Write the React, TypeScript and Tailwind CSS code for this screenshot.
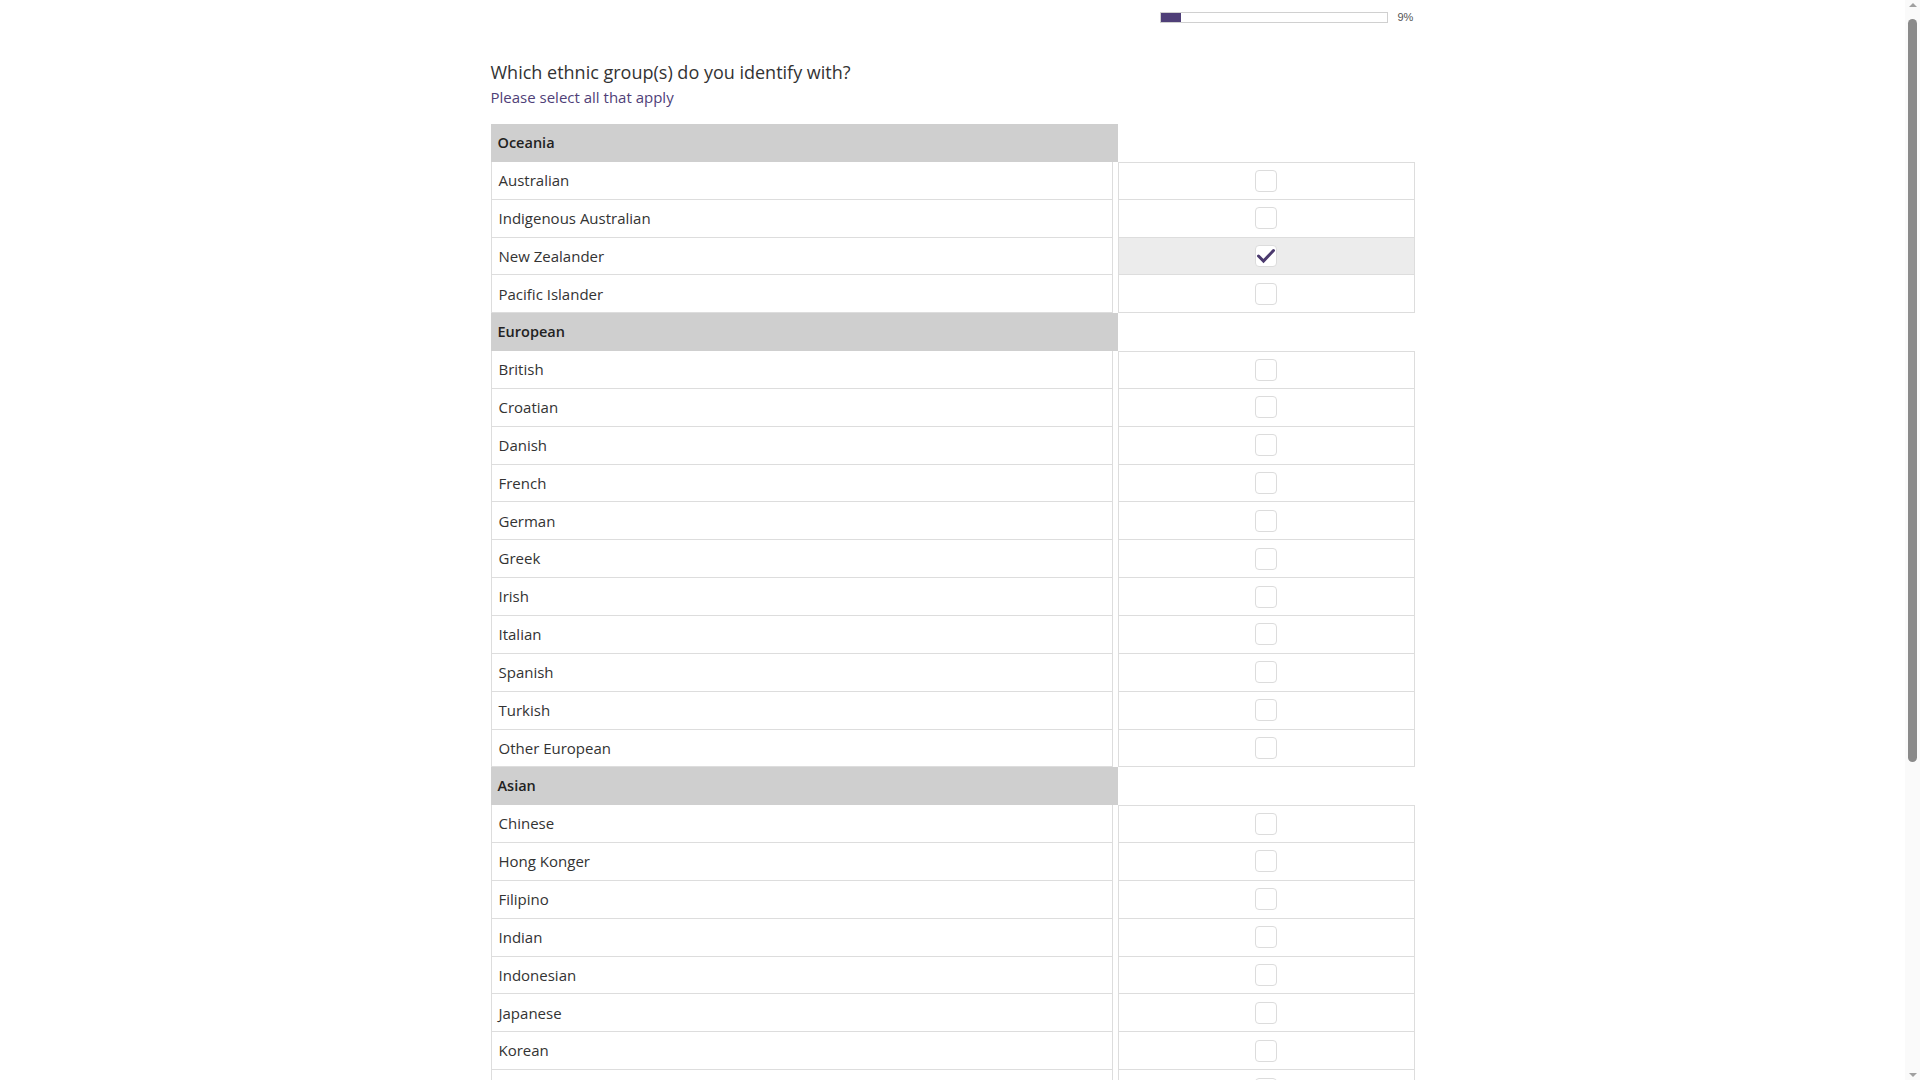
import React from "react";

type Group = { name: string; items: string[] };

const groups: Group[] = [
  { name: "Oceania", items: ["Australian", "Indigenous Australian", "New Zealander", "Pacific Islander"] },
  {
    name: "European",
    items: ["British", "Croatian", "Danish", "French", "German", "Greek", "Irish", "Italian", "Spanish", "Turkish", "Other European"],
  },
  {
    name: "Asian",
    items: ["Chinese", "Hong Konger", "Filipino", "Indian", "Indonesian", "Japanese", "Korean", "Malaysian", "Sri Lankan", "Vietnamese"],
  },
];

const checked = new Set(["New Zealander"]);

function Check({ on }: { on: boolean }) {
  return (
    <div className="w-[22px] h-[22px] rounded-[4px] border border-[#dcdcdc] bg-white flex items-center justify-center">
      {on && (
        <svg width="22" height="22" viewBox="0 0 22 22" className="-m-px">
          <path d="M3.5 11 L8.5 16 L18.5 5.5" fill="none" stroke="#4b3a6e" strokeWidth="3" strokeLinecap="round" strokeLinejoin="miter" />
        </svg>
      )}
    </div>
  );
}

export default function App() {
  return (
    <div className="w-[1920px] h-[1080px] flex overflow-hidden bg-white" style={{ fontFamily: '"Open Sans", "Liberation Sans", sans-serif' }}>
      <div className="flex-1 overflow-hidden">
        <div className="w-[924px] mx-auto">
          <div className="pt-[12px] flex items-center justify-end h-[23px]">
            <div className="w-[228px] h-[11px] border border-[#d0d0d0] bg-white">
              <div className="h-full w-[20px] bg-[#4f3f78]" />
            </div>
            <span className="ml-[10px] w-[17px] text-[11px] text-[#555] leading-none" style={{ fontFamily: '"Liberation Sans", sans-serif' }}>9%</span>
          </div>
          <div className="mt-[37px] text-[18px] leading-[24px] text-[#333]">Which ethnic group(s) do you identify with?</div>
          <div className="mt-[3px] text-[15px] leading-[20px] text-[#4f3f78]">Please select all that apply</div>
          <div className="mt-[17px]">
            {groups.map((g) => (
              <div key={g.name}>
                <div className="flex h-[37.85px]">
                  <div className="w-[627px] bg-[#cfcfcf] flex items-center pl-[7px] text-[14.5px] font-semibold text-[#222]">{g.name}</div>
                </div>
                {g.items.map((it, i) => {
                  const on = checked.has(it);
                  return (
                    <div key={it} className="flex h-[37.85px]">
                      <div className="w-[622px] box-border border-l border-r border-b border-[#dddddd] flex items-center pl-[7px] text-[15px] text-[#333]">
                        {it}
                      </div>
                      <div className="w-[5px]" />
                      <div
                        className={
                          "w-[297px] box-border border-l border-r border-b border-[#dddddd] flex items-center justify-center " +
                          (i === 0 ? "border-t " : "") +
                          (on ? "bg-[#ececec]" : "bg-white")
                        }
                      >
                        <Check on={on} />
                      </div>
                    </div>
                  );
                })}
              </div>
            ))}
          </div>
        </div>
      </div>
      <div className="w-[15px] h-full bg-[#fafafa] flex flex-col items-center">
        <div className="h-[10px] flex items-center justify-center">
          <div className="w-0 h-0 border-l-[4px] border-r-[4px] border-b-[4px] border-l-transparent border-r-transparent border-b-[#a0a0a0]" />
        </div>
        <div className="mt-[9px] w-[9px] h-[743px] rounded-full bg-[#8a8a8a]" />
        <div className="flex-1" />
        <div className="h-[10px] flex items-center justify-center">
          <div className="w-0 h-0 border-l-[4px] border-r-[4px] border-t-[4px] border-l-transparent border-r-transparent border-t-[#a0a0a0]" />
        </div>
      </div>
    </div>
  );
}
